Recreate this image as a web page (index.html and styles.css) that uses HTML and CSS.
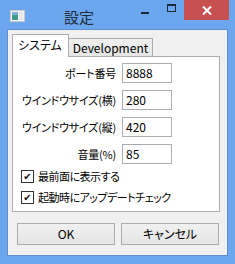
FILE: index.html
```html
<!DOCTYPE html>
<html lang="ja">
<head>
    <meta charset="UTF-8">
    <title>設定</title>
    <link rel="stylesheet" href="styles.css">
</head>
<body>
    <div class="window">
        <div class="titlebar">
            <div class="app-icon">
                <svg width="15" height="12" viewBox="0 0 15 12">
                    <rect x="0.5" y="0.5" width="14" height="11" fill="#f4f4f4" stroke="#c8c8c8"/>
                    <rect x="2" y="2" width="6" height="8" fill="#3f9a8a"/>
                    <rect x="2" y="2" width="6" height="3" fill="#7fb0d8"/>
                    <rect x="9" y="2" width="4" height="8" fill="#e6e6e6"/>
                </svg>
            </div>
            <div class="title">設定</div>
            <div class="controls">
                <div class="ctl ctl-min"><span class="min-bar"></span></div>
                <div class="ctl ctl-max"><span class="max-box"></span></div>
                <div class="ctl ctl-close">
                    <svg width="10" height="9" viewBox="0 0 10 9">
                        <path d="M1 0.5 L9 8.5 M9 0.5 L1 8.5" stroke="#fff" stroke-width="2"/>
                    </svg>
                </div>
            </div>
        </div>

        <div class="client">
            <div class="tabs">
                <div class="tab active">システム</div>
                <div class="tab">Development</div>
            </div>
            <div class="panel">
                <div class="form">
                    <label class="lbl">ポート番号</label>
                    <div class="input">8888</div>
                    <label class="lbl">ウインドウサイズ(横)</label>
                    <div class="input">280</div>
                    <label class="lbl">ウインドウサイズ(縦)</label>
                    <div class="input">420</div>
                    <label class="lbl">音量(%)</label>
                    <div class="input">85</div>
                </div>
                <div class="checks">
                    <div class="check"><span class="box">✔</span>最前面に表示する</div>
                    <div class="check"><span class="box">✔</span>起動時にアップデートチェック</div>
                </div>
            </div>
            <div class="buttons">
                <div class="btn">OK</div>
                <div class="btn">キャンセル</div>
            </div>
        </div>
    </div>
</body>
</html>
```

FILE: styles.css
```css
body {
    margin: 0;
    font-family: "Noto Sans CJK JP", "Noto Sans", sans-serif;
    font-size: 12px;
    line-height: 16px;
    color: #000;
    font-feature-settings: "palt";
}

.window {
    width: 235px;
    height: 264px;
    box-sizing: border-box;
    background-color: #6ba6ef;
    padding: 0 7px 8px 7px;
    display: flex;
    flex-direction: column;
    overflow: hidden;
}

.titlebar {
    height: 29px;
    display: flex;
    align-items: flex-start;
    flex-shrink: 0;
}

.app-icon {
    margin: 9px 0 0 3px;
    height: 12px;
}

.title {
    font-size: 15px;
    color: #1e2d3d;
    margin: 7px 0 0 39px;
    line-height: 20px;
    font-feature-settings: normal;
}

.controls {
    margin-left: auto;
    display: flex;
    margin-right: -1px;
}

.ctl {
    height: 20px;
    display: flex;
    align-items: center;
    justify-content: center;
}

.ctl-min {
    width: 27px;
}

.min-bar {
    width: 8px;
    height: 2px;
    background: #1b2a3a;
    margin-top: 5px;
}

.ctl-max {
    width: 26px;
}

.max-box {
    width: 7px;
    height: 5px;
    border: 1px solid #1b2a3a;
    border-top-width: 2px;
    margin-top: -4px;
}

.ctl-close {
    width: 45px;
    background: #c75050;
}

.client {
    flex: 1;
    background: #f0f0f0;
    border: 1px solid #5d8fd0;
    padding: 5px 7px 0 4px;
    display: flex;
    flex-direction: column;
}

.tabs {
    display: flex;
    align-items: flex-end;
    height: 21px;
    position: relative;
    z-index: 1;
}

.tab {
    height: 17px;
    line-height: 17px;
    padding: 0 4px;
    border: 1px solid #acacac;
    border-bottom: none;
    background: linear-gradient(#f0f0f0, #e5e5e5);
    margin-left: -1px;
    white-space: nowrap;
}

.tab.active {
    line-height: 20px;
    background: #fff;
    margin-left: 0;
    padding: 0 6px 0 5px;
    margin-bottom: -1px;
    height: 22px;
}

.panel {
    height: 156px;
    flex-shrink: 0;
    box-sizing: border-box;
    background: #fff;
    border: 1px solid #acacac;
    padding: 6px 0 0 0;
}

.form {
    display: grid;
    grid-template-columns: 103px 50px;
    column-gap: 6px;
    row-gap: 7px;
}

.lbl {
    display: flex;
    justify-content: flex-end;
    white-space: nowrap;
    line-height: 20px;
    font-size: 11px;
    letter-spacing: -0.2px;
}

.input {
    height: 20px;
    box-sizing: border-box;
    border: 1px solid #abadb3;
    padding-left: 3px;
    line-height: 18px;
}

.checks {
    padding: 6px 0 0 8px;
    display: flex;
    flex-direction: column;
    gap: 8px;
}

.check {
    display: flex;
    align-items: center;
    height: 13px;
    line-height: 13px;
    white-space: nowrap;
    font-size: 11px;
    letter-spacing: -0.5px;
}

.box {
    width: 11px;
    height: 11px;
    border: 1px solid #333;
    background: #fff;
    font-size: 10px;
    line-height: 11px;
    text-align: center;
    margin-right: 4px;
    font-family: "DejaVu Sans", sans-serif;
    letter-spacing: 0;
    color: #111;
}

.buttons {
    display: flex;
    gap: 6px;
    padding: 11px 0 0 5px;
}

.btn {
    width: 98px;
    height: 22px;
    box-sizing: border-box;
    border: 1px solid #acacac;
    background: linear-gradient(#f0f0f0, #e5e5e5);
    text-align: center;
    line-height: 20px;
}
```
